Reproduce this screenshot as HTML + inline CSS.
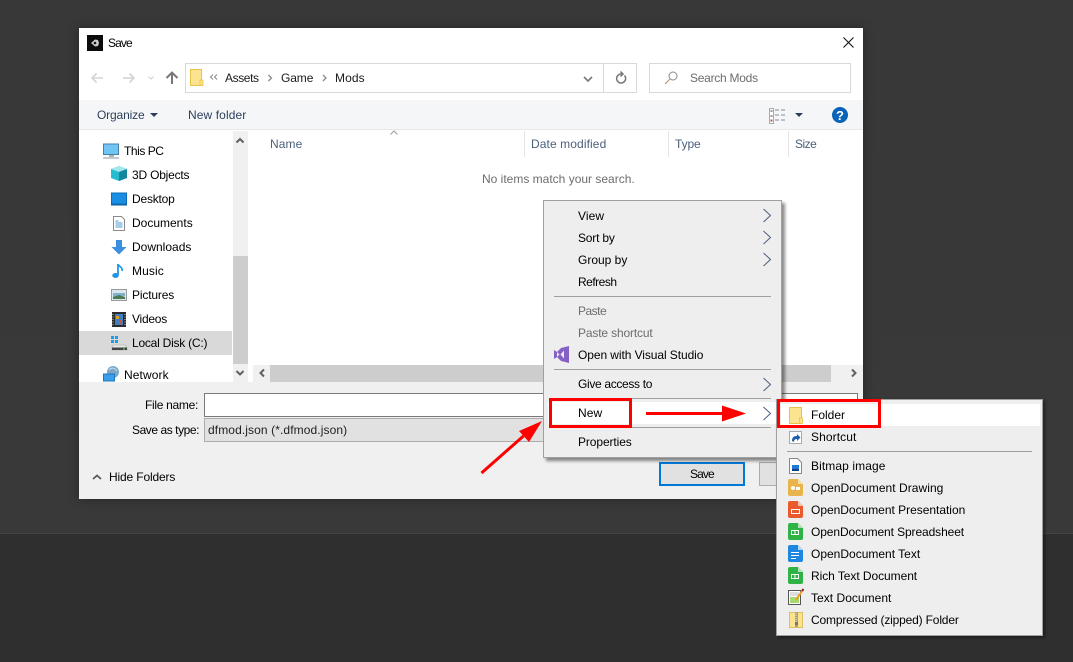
<!DOCTYPE html>
<html><head><meta charset="utf-8"><title>Save</title>
<style>
html,body{margin:0;padding:0}
body{width:1073px;height:662px;overflow:hidden;position:relative;background:#383838;font-family:"Liberation Sans",sans-serif;font-size:12px;color:#000}
div{position:absolute;box-sizing:border-box}
.t{white-space:nowrap;line-height:16px;height:16px;letter-spacing:.1px}
.g{color:#6d6d6d}
.h{color:#4c607a}
svg{position:absolute;left:0;top:0}
</style></head><body>
<div style="left:0;top:0;width:1073px;height:533px;background:linear-gradient(#383838,#393939)"></div>
<div style="left:0;top:533px;width:1073px;height:1px;background:#444"></div>
<div style="left:0;top:534px;width:1073px;height:128px;background:#2f2f2f"></div>

<!-- dialog -->
<div style="left:79px;top:28px;width:784px;height:471px;background:#fff;box-shadow:0 0 10px rgba(0,0,0,.35)"></div>
<div style="left:79px;top:100px;width:784px;height:30px;background:#f5f6f7;border-bottom:1px solid #e8e8e8"></div>
<div style="left:185px;top:63px;width:452px;height:30px;border:1px solid #d9d9d9"></div>
<div style="left:603px;top:63px;width:1px;height:30px;background:#d9d9d9"></div>
<div style="left:649px;top:63px;width:202px;height:30px;border:1px solid #d9d9d9"></div>
<div style="left:233px;top:131px;width:15px;height:253px;background:#f0f0f0"></div>
<div style="left:233px;top:256px;width:15px;height:108px;background:#cdcdcd"></div>
<div style="left:79px;top:331px;width:153px;height:24px;background:#d9d9d9"></div>
<div style="left:524px;top:131px;width:1px;height:26px;background:#e5e5e5"></div>
<div style="left:668px;top:131px;width:1px;height:26px;background:#e5e5e5"></div>
<div style="left:788px;top:131px;width:1px;height:26px;background:#e5e5e5"></div>
<div style="left:253px;top:365px;width:610px;height:17px;background:#f0f0f0"></div>
<div style="left:270px;top:365px;width:561px;height:17px;background:#cdcdcd"></div>
<div style="left:79px;top:382px;width:784px;height:117px;background:#f0f0f0"></div>
<div style="left:204px;top:393px;width:654px;height:24px;background:#fff;border:1px solid #7a7a7a"></div>
<div style="left:204px;top:418px;width:654px;height:24px;background:#e1e1e1;border:1px solid #adadad"></div>
<div style="left:659px;top:462px;width:86px;height:24px;background:#e1e1e1;border:2px solid #0078d7"></div>
<div style="left:759px;top:462px;width:60px;height:24px;background:#e1e1e1;border:1px solid #adadad"></div>

<div class="t" style="left:108px;top:35px;letter-spacing:-.9px">Save</div>
<div class="t" style="left:225px;top:70px;color:#1a1a1a;letter-spacing:-.4px">Assets</div>
<div class="t" style="left:281px;top:70px;color:#1a1a1a;letter-spacing:-.1px">Game</div>
<div class="t" style="left:335px;top:70px;color:#1a1a1a">Mods</div>
<div class="t g" style="left:690px;top:70px;letter-spacing:-.26px">Search Mods</div>
<div class="t" style="left:97px;top:107px;color:#2b3f5c;letter-spacing:-.15px">Organize</div>
<div class="t" style="left:188px;top:107px;color:#2b3f5c">New folder</div>
<div class="t h" style="left:270px;top:136px">Name</div>
<div class="t h" style="left:531px;top:136px">Date modified</div>
<div class="t h" style="left:675px;top:136px;letter-spacing:-.1px">Type</div>
<div class="t h" style="left:795px;top:136px;letter-spacing:-.5px">Size</div>
<div class="t g" style="left:482px;top:171px;letter-spacing:0">No items match your search.</div>
<div class="t" style="left:124px;top:143px;letter-spacing:-.45px">This PC</div>
<div class="t" style="left:132px;top:167px;letter-spacing:-.2px">3D Objects</div>
<div class="t" style="left:132px;top:191px;letter-spacing:-.2px">Desktop</div>
<div class="t" style="left:132px;top:215px;letter-spacing:0">Documents</div>
<div class="t" style="left:132px;top:239px;letter-spacing:0">Downloads</div>
<div class="t" style="left:132px;top:263px">Music</div>
<div class="t" style="left:132px;top:287px;letter-spacing:-.15px">Pictures</div>
<div class="t" style="left:132px;top:311px;letter-spacing:-.25px">Videos</div>
<div class="t" style="left:132px;top:335px;letter-spacing:-.23px">Local Disk (C:)</div>
<div class="t" style="left:124px;top:367px">Network</div>
<div class="t" style="left:145px;top:397px;letter-spacing:-.3px">File name:</div>
<div class="t" style="left:132px;top:422px;letter-spacing:-.44px">Save as type:</div>
<div class="t" style="left:208px;top:422px;color:#222">dfmod.json (*.dfmod.json)</div>
<div class="t" style="left:109px;top:469px;letter-spacing:-.15px">Hide Folders</div>
<div class="t" style="left:690px;top:466px;letter-spacing:-.9px">Save</div>

<!-- context menu -->
<div style="left:543px;top:200px;width:239px;height:258px;background:#eee;border:1px solid #a0a0a0;box-shadow:3px 3px 3px rgba(0,0,0,.45)"></div>
<div style="left:554px;top:296px;width:217px;height:1px;background:#a0a0a0"></div>
<div style="left:554px;top:369px;width:217px;height:1px;background:#a0a0a0"></div>
<div style="left:554px;top:398px;width:217px;height:1px;background:#a0a0a0"></div>
<div style="left:554px;top:427px;width:217px;height:1px;background:#a0a0a0"></div>
<div style="left:548px;top:402px;width:229px;height:22px;background:#fff"></div>
<div class="t" style="left:578px;top:208px">View</div>
<div class="t" style="left:578px;top:230px;letter-spacing:-.2px">Sort by</div>
<div class="t" style="left:578px;top:252px;letter-spacing:0">Group by</div>
<div class="t" style="left:578px;top:274px;letter-spacing:-.5px">Refresh</div>
<div class="t g" style="left:578px;top:303px;letter-spacing:-.5px">Paste</div>
<div class="t g" style="left:578px;top:325px;letter-spacing:-.15px">Paste shortcut</div>
<div class="t" style="left:578px;top:347px;letter-spacing:-.08px">Open with Visual Studio</div>
<div class="t" style="left:578px;top:376px;letter-spacing:-.33px">Give access to</div>
<div class="t" style="left:578px;top:405px">New</div>
<div class="t" style="left:578px;top:434px;letter-spacing:-.1px">Properties</div>

<!-- submenu -->
<div style="left:776px;top:399px;width:267px;height:237px;background:#eee;border:1px solid #a0a0a0;box-shadow:2px 2px 3px rgba(0,0,0,.4)"></div>
<div style="left:781px;top:404px;width:259px;height:22px;background:#fff"></div>
<div style="left:787px;top:451px;width:245px;height:1px;background:#a0a0a0"></div>
<div class="t" style="left:811px;top:407px;letter-spacing:0">Folder</div>
<div class="t" style="left:811px;top:429px">Shortcut</div>
<div class="t" style="left:811px;top:458px">Bitmap image</div>
<div class="t" style="left:811px;top:480px;letter-spacing:.05px">OpenDocument Drawing</div>
<div class="t" style="left:811px;top:502px;letter-spacing:-.02px">OpenDocument Presentation</div>
<div class="t" style="left:811px;top:524px;letter-spacing:-.1px">OpenDocument Spreadsheet</div>
<div class="t" style="left:811px;top:546px;letter-spacing:0">OpenDocument Text</div>
<div class="t" style="left:811px;top:568px;letter-spacing:-.06px">Rich Text Document</div>
<div class="t" style="left:811px;top:590px;letter-spacing:.03px">Text Document</div>
<div class="t" style="left:811px;top:612px;letter-spacing:-.17px">Compressed (zipped) Folder</div>

<svg width="1073" height="662" viewBox="0 0 1073 662" fill="none">
<!-- title icon -->
<rect x="87" y="35" width="16" height="16" fill="#0c0c0c"/>
<path d="M91 43l4-3.500 3 .5 1 3-1 3-3 .5z" fill="#ccc"/><circle cx="95" cy="43" r="1.300" fill="#111"/>
<path d="M843.500 37.500l10 10M853.500 37.500l-10 10" stroke="#111" stroke-width="1.100"/>
<!-- nav -->
<path d="M92 78h11M96.500 73.500L92 78l4.500 4.500" stroke="#d4d4d4" stroke-width="1.600"/>
<path d="M123 78h11M129.500 73.500L134 78l-4.500 4.500" stroke="#d4d4d4" stroke-width="1.600"/>
<path d="M148.500 76.500l2.500 2.500 2.500-2.500" stroke="#d4d4d4" stroke-width="1.200"/>
<path d="M172 84V73M166.500 78l5.500-5.500 5.500 5.500" stroke="#777" stroke-width="2"/>
<!-- address folder -->
<path d="M190.500 69.500h11v16h-11z" fill="#fbe38f" stroke="#e9c347"/><path d="M200 80h3v5.500h-3z" fill="#fbe38f" stroke="#e9c347" stroke-width=".8"/>
<path d="M213 74.500l-2.500 2.500 2.500 2.500M217 74.500l-2.500 2.500 2.500 2.500" stroke="#888" stroke-width="1"/>
<path d="M268.500 75l3 3-3 3M323 75l3 3-3 3" stroke="#888" stroke-width="1.300"/>
<path d="M584 77l4 4 4-4" stroke="#777" stroke-width="1.600"/>
<path d="M624.500 75.500a4.500 4.500 0 1 1-3.500-1.500h1.500M620.500 71.500l2.500 2.500-2.500 2.500" stroke="#777" stroke-width="1.500"/>
<!-- search -->
<circle cx="673" cy="76" r="4" stroke="#8a8a8a"/><path d="M670 79l-5 5" stroke="#b98a70" stroke-width="1"/>
<!-- toolbar -->
<path d="M150 113h8l-4 4z" fill="#2b3f5c"/>
<path d="M769.500 108.500h4v15h-4z" stroke="#aaa" fill="#fff"/><path d="M770.500 110h2v2h-2zM770.500 115h2v2h-2z" fill="#999"/><path d="M770.500 119.500h2v2h-2z" fill="#b55"/>
<path d="M775 110h4M781 110h4M775 115h4M781 115h4M775 120h4M781 120h4" stroke="#889" stroke-width="1"/>
<path d="M795 113h8l-4 4z" fill="#2b3f5c"/>
<circle cx="840" cy="115" r="8" fill="#0a63b8"/>
<text x="840" y="120" font-family="Liberation Sans" font-size="13" font-weight="700" fill="#fff" text-anchor="middle">?</text>
<!-- scrollbar arrows -->
<path d="M236.500 142.500l3.500-3.500 3.500 3.500M236.500 371l3.500 3.500 3.500-3.500" stroke="#606060" stroke-width="2"/>
<path d="M264 369.500L260.500 373l3.500 3.500M852 369.500l3.500 3.500-3.500 3.500" stroke="#606060" stroke-width="2"/>
<path d="M390.500 134.500l3.500-3.500 3.500 3.500" stroke="#999"/>
<path d="M93 479l4-3.500 4 3.500" stroke="#555" stroke-width="1.600"/>
<!-- nav tree icons -->
<rect x="103.500" y="144" width="15" height="10.500" fill="#6fc6f5" stroke="#4a7ea3"/><path d="M109 155h5v2h-5z" fill="#9bb"/><path d="M103 158h16" stroke="#8a98a5"/>
<path d="M111 169l8-3 8 3v9l-8 3-8-3z" fill="#23bcd1"/><path d="M111 169l8 3 8-3-8-3z" fill="#a3e6ee"/><path d="M119 172l8-3v9l-8 3z" fill="#14879c"/>
<rect x="111.500" y="193" width="15" height="11" fill="#1a8ee2" stroke="#0d6ab5"/><path d="M111 205h16" stroke="#0d5f9f"/>
<path d="M113.500 216.500h8l3 3v11h-11z" fill="#fff" stroke="#8a8a8a"/><path d="M115.500 221h3M115.500 223h7M115.500 225h7M115.500 227h7" stroke="#4a9bd0" stroke-width="1"/>
<path d="M116 240h6v7h4.500l-7.500 7.500-7.500-7.500H116z" fill="#3b8fe0"/>
<path d="M118 264v11" stroke="#1d95e6" stroke-width="1.800"/><ellipse cx="115.500" cy="275.500" rx="3.200" ry="2.500" fill="#1d95e6"/><path d="M118 264c1 3 5 3 4 7" stroke="#1d95e6" stroke-width="1.600"/>
<rect x="111.500" y="289.500" width="15" height="11" fill="#dbe7ee" stroke="#999"/><path d="M113 293h12v3l-12 1z" fill="#7fb0d0"/><path d="M113 297l6-2 6 2v2h-12z" fill="#4d7a50"/>
<rect x="112" y="312" width="14" height="15" fill="#2c2c2c"/><rect x="115" y="314" width="8" height="11" fill="#3f7fc4"/><path d="M116 316h3v3h-3z" fill="#d8a020"/><path d="M120 320h2v4h-2z" fill="#d85030"/><path d="M113 314v11M125 314v11" stroke="#ccc" stroke-dasharray="1 1.500"/>
<path d="M111 336h3v3h-3zM115 336h3v3h-3zM111 340h3v3h-3zM115 340h3v3h-3z" fill="#1aa0e8"/><path d="M113 345h12l2 3v2h-15v-3z" fill="#e8e8e8" stroke="#aaa" stroke-width=".6"/><rect x="112" y="347.500" width="15" height="2.500" fill="#444"/><circle cx="124" cy="349" r=".8" fill="#5f5"/>
<circle cx="113" cy="372" r="6" fill="#7ba8c8"/><path d="M109 370c3-3 6-2 8 1" stroke="#cde"/><rect x="103.500" y="374" width="11" height="7" fill="#3b9ee8" stroke="#1a78c2"/>
<!-- context menu chevrons -->
<path d="M763.500 209l7 6.500-7 6.500M763.500 231l7 6.500-7 6.500M763.500 253l7 6.500-7 6.500M763.500 378l7 6.500-7 6.500M763.500 407l7 6.500-7 6.500" stroke="#4d5f7a" stroke-width="1"/>
<path d="M554 350l3 2 4-4 8-2v17l-8-2-4-4-3 2z" fill="#8661c5"/><path d="M557 352l2.500 2.500-2.500 2.500zM564 350.500l-3.500 4 3.500 4z" fill="#eee"/>
<!-- submenu icons -->
<path d="M789.500 407.500h12v16h-12z" fill="#fbe38f" stroke="#e9c347"/><path d="M799.500 418h3v5.500h-3z" fill="#fbe38f" stroke="#e9c347" stroke-width=".8"/>
<rect x="789.500" y="431.500" width="12" height="12" fill="#fff" stroke="#aaa"/><path d="M792 441c0-4 2-5 5-5v-2l3.500 3.500-3.500 3.500v-2c-2 0-3 1-3 3z" fill="#1f5fae"/>
<path d="M789.500 458.500h8l4 4v11h-12z" fill="#fff" stroke="#888"/><rect x="792" y="465" width="7" height="6" fill="#1f7ad6"/><path d="M792 469h7v2h-7z" fill="#123f80"/>
<path d="M788 481a2 2 0 0 1 2-2h8l5 5v10a2 2 0 0 1-2 2h-11a2 2 0 0 1-2-2z" fill="#e9b44c"/><path d="M798 479l5 5h-5z" fill="#f6dca6"/><circle cx="793" cy="488" r="2" fill="#fff"/><rect x="796" y="487" width="4" height="3" fill="#fff"/>
<path d="M788 503a2 2 0 0 1 2-2h8l5 5v10a2 2 0 0 1-2 2h-11a2 2 0 0 1-2-2z" fill="#ea5a2c"/><path d="M798 501l5 5h-5z" fill="#f8c0a8"/><rect x="791.500" y="509.500" width="8" height="4" fill="none" stroke="#fff"/>
<path d="M788 525a2 2 0 0 1 2-2h8l5 5v10a2 2 0 0 1-2 2h-11a2 2 0 0 1-2-2z" fill="#2fb344"/><path d="M798 523l5 5h-5z" fill="#b0e4b8"/><rect x="791.500" y="530.500" width="7" height="4" fill="none" stroke="#fff"/><path d="M795 530v5" stroke="#fff"/>
<path d="M788 547a2 2 0 0 1 2-2h8l5 5v10a2 2 0 0 1-2 2h-11a2 2 0 0 1-2-2z" fill="#1d86e0"/><path d="M798 545l5 5h-5z" fill="#b0d8f6"/><path d="M791 552.500h8M791 555.500h8M791 558.500h5" stroke="#fff"/>
<path d="M788 569a2 2 0 0 1 2-2h8l5 5v10a2 2 0 0 1-2 2h-11a2 2 0 0 1-2-2z" fill="#2fb344"/><path d="M798 567l5 5h-5z" fill="#b0e4b8"/><rect x="791.500" y="574.500" width="7" height="4" fill="none" stroke="#fff"/><path d="M795 574v5" stroke="#fff"/>
<path d="M788.500 590.500h12v14h-12z" fill="#fff" stroke="#555"/><path d="M790 597h9v6h-9z" fill="#a8d870"/><path d="M790 593h9M790 595h9" stroke="#bbb"/><path d="M796 600l6-9" stroke="#e8a020" stroke-width="2"/><path d="M802 591l1.500-2" stroke="#a01818" stroke-width="2"/>
<path d="M789.500 612.500h13v15h-13z" fill="#fbe38f" stroke="#e0c060"/><path d="M795 612h3v15h-3z" fill="#a9a070"/><path d="M796 613v9" stroke="#eee" stroke-dasharray="1 1"/><rect x="795" y="622" width="3" height="3" fill="#777"/>
<!-- red annotations -->
<rect x="550.500" y="399.500" width="80" height="27" stroke="#f00" stroke-width="3"/>
<rect x="778.500" y="400.500" width="101" height="26" stroke="#f00" stroke-width="3"/>
<path d="M646 413.500h77" stroke="#f00" stroke-width="3"/>
<path d="M722 405.500l24 8-24 8z" fill="#f00"/>
<path d="M481.500 473l42-37" stroke="#f00" stroke-width="3"/>
<path d="M542 421l-23 10 10 11z" fill="#f00"/>
</svg>
</body></html>
